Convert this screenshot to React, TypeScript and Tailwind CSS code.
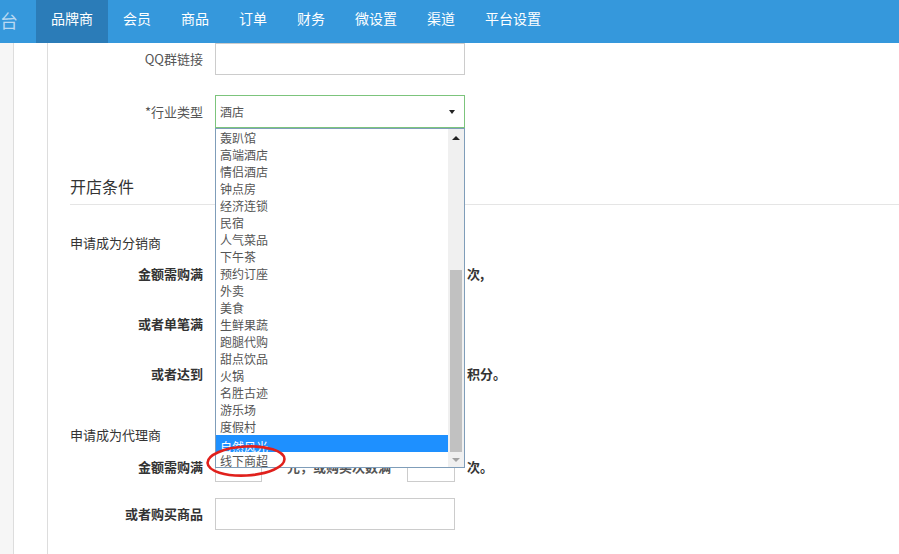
const font = { fontFamily: '"Noto Sans CJK SC", "Liberation Sans", sans-serif' }

const navItems = ['品牌商', '会员', '商品', '订单', '财务', '微设置', '渠道', '平台设置']

const options = [
  '轰趴馆', '高端酒店', '情侣酒店', '钟点房', '经济连锁', '民宿', '人气菜品', '下午茶', '预约订座', '外卖',
  '美食', '生鲜果蔬', '跑腿代购', '甜点饮品', '火锅', '名胜古迹', '游乐场', '度假村', '自然风光', '线下商超',
]

function Label({ text, bold }: { text: string; bold?: boolean }) {
  return (
    <div className={`w-[167px] pr-[12px] text-right text-[13px] shrink-0 ${bold ? 'font-bold text-[#333]' : 'text-[#555]'}`}>
      {text}
    </div>
  )
}

function Box({ w, h = 'h-[30px]' }: { w: string; h?: string }) {
  return <div className={`${w} ${h} border border-[#ccc] bg-white shrink-0`} />
}

export default function App() {
  return (
    <div className="w-[899px] h-[554px] overflow-hidden bg-white relative" style={font}>
      {/* Top nav */}
      <div className="h-[43px] bg-[#3598dc] flex">
        <div className="w-[36px] overflow-hidden flex justify-end items-center pb-[2px]">
          <span className="text-[18px] text-[#b9d9f2] whitespace-nowrap pr-[18px]">台</span>
        </div>
        {navItems.map((n, i) => (
          <div
            key={n}
            className={`px-[15px] h-full leading-[37px] text-[14px] text-white ${i === 0 ? 'bg-[#2b7cb8]' : ''}`}
          >
            {n}
          </div>
        ))}
      </div>

      <div className="flex h-[511px]">
        <div className="w-[14px] bg-[#f6f6f6] border-r border-[#ddd]" />
        <div className="w-[33px]" />
        <div className="flex-1 border-l border-[#ddd] relative">
          {/* QQ group */}
          <div className="flex items-center h-[32px]">
            <Label text="QQ群链接" />
            <Box w="w-[250px]" h="h-[32px]" />
          </div>

          {/* Industry */}
          <div className="flex items-center h-[33px] mt-[20px]">
            <Label text="*行业类型" />
            <div className="w-[250px] h-[33px] border border-[#7cc47c] flex items-center justify-between pl-[4px] pr-[9px] text-[12px] text-[#555]">
              <span>酒店</span>
              <span className="w-0 h-0 border-l-[3px] border-r-[3px] border-t-[4px] border-l-transparent border-r-transparent border-t-[#222]" />
            </div>
          </div>

          {/* 开店条件 */}
          <div className="ml-[22px] mt-[48px] pb-[8px] border-b border-[#e5e5e5] text-[16px] leading-[20px] text-[#333]">
            开店条件
          </div>

          <div className="ml-[22px] mt-[28px] text-[13px] leading-[20px] text-[#333]">申请成为分销商</div>

          <div className="flex items-center h-[30px] mt-[6px]">
            <Label text="金额需购满" bold />
            <Box w="w-[47px]" />
            <span className="ml-[25px] w-[104px] text-[13px] font-bold text-[#333]">元，或购买次数满</span>
            <div className="ml-[16px]"><Box w="w-[48px]" /></div>
            <span className="ml-[12px] text-[13px] font-bold text-[#333]">次,</span>
          </div>
          <div className="flex items-center h-[30px] mt-[20px]">
            <Label text="或者单笔满" bold />
            <Box w="w-[240px]" />
          </div>
          <div className="flex items-center h-[30px] mt-[20px]">
            <Label text="或者达到" bold />
            <Box w="w-[240px]" />
            <span className="ml-[12px] text-[13px] font-bold text-[#333]">积分。</span>
          </div>

          <div className="ml-[22px] mt-[36px] text-[13px] leading-[20px] text-[#333]">申请成为代理商</div>

          <div className="flex items-center h-[30px] mt-[7px]">
            <Label text="金额需购满" bold />
            <Box w="w-[47px]" />
            <span className="ml-[25px] w-[104px] text-[13px] font-bold text-[#555]">元，或购买次数满</span>
            <div className="ml-[16px]"><Box w="w-[48px]" /></div>
            <span className="ml-[12px] text-[13px] font-bold text-[#333]">次。</span>
          </div>
          <div className="flex items-center h-[32px] mt-[16px]">
            <Label text="或者购买商品" bold />
            <Box w="w-[240px]" h="h-[32px]" />
          </div>

          {/* Open select list */}
          <div className="absolute left-[167px] top-[85px] w-[250px] h-[340px] border border-[#7f9db9] bg-white flex">
            <div className="flex-1 overflow-hidden">
              {options.map((o, i) => (
                <div
                  key={o}
                  className={`h-[17px] overflow-hidden pl-[4px] text-[12px] whitespace-nowrap ${
                    i === 18 ? 'bg-[#1e90ff] text-white leading-[24px]' : 'text-[#555] leading-[17px]'
                  }`}
                >
                  {o}
                </div>
              ))}
            </div>
            <div className="w-[16px] bg-[#f0f0f0] flex flex-col items-center">
              <div className="h-[17px] flex items-center justify-center">
                <span className="w-0 h-0 border-l-[4px] border-r-[4px] border-b-[4px] border-l-transparent border-r-transparent border-b-[#222]" />
              </div>
              <div className="h-[124px]" />
              <div className="w-[12px] h-[182px] bg-[#c1c1c1]" />
              <div className="flex-1 flex items-center justify-center">
                <span className="w-0 h-0 border-l-[4px] border-r-[4px] border-t-[4px] border-l-transparent border-r-transparent border-t-[#a3a3a3]" />
              </div>
            </div>
          </div>
        </div>
      </div>

      {/* Red annotation circle */}
      <svg className="absolute left-[205px] top-[443px]" width="84" height="36" viewBox="0 0 84 36">
        <ellipse cx="41" cy="18" rx="38.5" ry="14.5" fill="none" stroke="#e0201c" strokeWidth="2.6" transform="rotate(-3 41 18)" />
      </svg>
    </div>
  )
}
